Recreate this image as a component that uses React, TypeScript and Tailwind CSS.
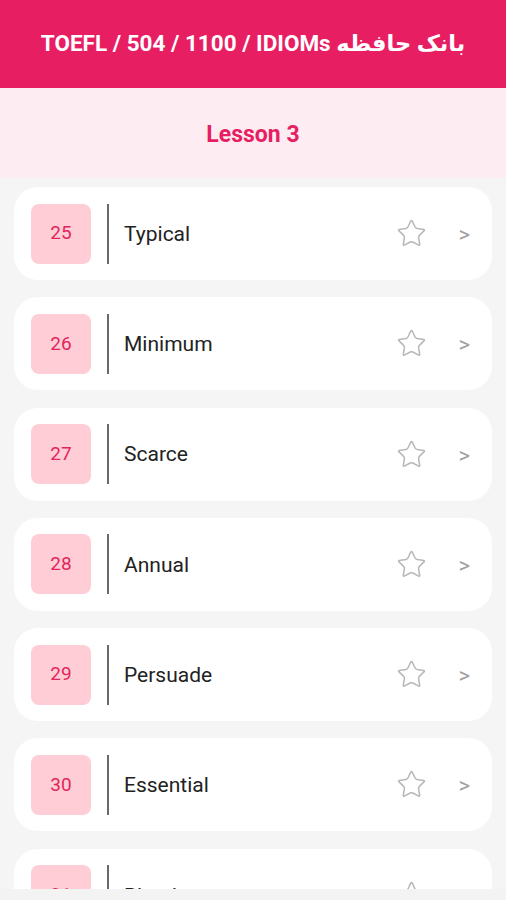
import { Star } from 'lucide-react';

const words = [
  { id: 25, word: 'Typical' },
  { id: 26, word: 'Minimum' },
  { id: 27, word: 'Scarce' },
  { id: 28, word: 'Annual' },
  { id: 29, word: 'Persuade' },
  { id: 30, word: 'Essential' },
  { id: 31, word: 'Blend' },
];

function WordCard({ id, word }: { id: number; word: string }) {
  return (
    <div className="flex items-center h-[93px] shrink-0 bg-white rounded-[24px] pl-[17px] pr-[22px]">
      <div className="w-[60px] h-[60px] rounded-lg bg-[#ffcdd6] flex items-center justify-center text-[19px] text-[#e3245c]">
        {id}
      </div>
      <div className="w-[2px] h-[60px] bg-[#6a6a6a] ml-[16px]"></div>
      <span className="ml-[15px] pt-[2px] text-[21px] text-[#222] flex-1">{word}</span>
      <Star size={31} strokeWidth={1.2} className="text-[#b8b8b8] mr-[31px]" />
      <span className="text-[22px] text-[#a0a0a0] pt-[2px]">&gt;</span>
    </div>
  );
}

export default function App() {
  return (
    <div
      className="w-[506px] h-[900px] flex flex-col bg-[#f5f5f5] overflow-hidden"
      style={{ fontFamily: 'Roboto, "DejaVu Sans", sans-serif' }}
    >
      {/* Header */}
      <header className="h-[88px] shrink-0 bg-[#e81e63] flex items-center justify-center">
        <h1 className="text-white font-bold text-[22.5px] pb-[1px]">
          TOEFL / 504 / 1100 / IDIOMs <span>بانک حافظه</span>
        </h1>
      </header>

      {/* Lesson title */}
      <div className="h-[90px] shrink-0 bg-[#fdecf1] flex items-center justify-center">
        <h2 className="text-[#e81e63] font-bold text-[23px] pt-[4px]">Lesson 3</h2>
      </div>

      {/* List */}
      <div className="flex-1 overflow-hidden flex flex-col gap-[17.3px] px-[14px] pt-[9px]">
        {words.map((w) => (
          <WordCard key={w.id} id={w.id} word={w.word} />
        ))}
      </div>
      <div className="h-[11px] shrink-0 bg-[#f3f3f3]"></div>
    </div>
  );
}
